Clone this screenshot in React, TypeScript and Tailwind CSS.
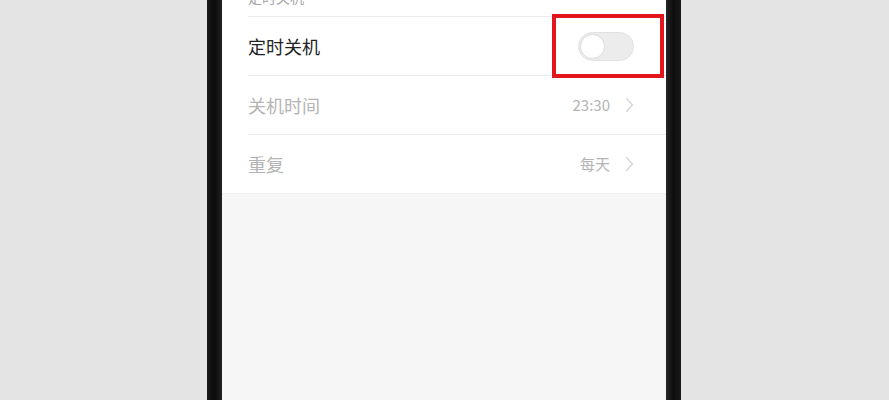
import React, { useState } from "react";

type Row = {
  label: string;
  value?: string;
  toggle?: boolean;
};

const rows: Row[] = [
  { label: "定时关机", toggle: true },
  { label: "关机时间", value: "23:30" },
  { label: "重复", value: "每天" },
];

const Chevron = () => (
  <svg width="9" height="16" viewBox="0 0 9 16" fill="none" className="ml-[15px]">
    <path d="M1.5 1.5 L7.5 8 L1.5 14.5" stroke="#d6d6d6" strokeWidth="1.4" strokeLinecap="round" strokeLinejoin="round" />
  </svg>
);

const Switch = ({ on, onChange }: { on: boolean; onChange: () => void }) => (
  <button
    onClick={onChange}
    className={`relative w-[56px] h-[29px] rounded-full border border-[#e2e2e2] ${on ? "bg-[#4cd964]" : "bg-[#ececec]"}`}
  >
    <span
      className={`absolute top-[1px] w-[25px] h-[25px] rounded-full bg-white border border-[#dcdcdc] ${on ? "left-[28px]" : "left-[1px]"}`}
    />
  </button>
);

export default function App() {
  const [enabled, setEnabled] = useState(false);

  return (
    <div
      className="flex w-[889px] h-[400px] overflow-hidden bg-[#e4e4e4]"
      style={{ fontFamily: '"Noto Sans CJK SC", "Noto Sans", sans-serif' }}
    >
      <div className="w-[207px] shrink-0" />

      {/* phone bezel, left */}
      <div className="w-[15px] shrink-0 bg-gradient-to-r from-[#1a1a1a] via-[#0b0b0b] to-[#222]" />

      {/* screen */}
      <div className="relative w-[444px] shrink-0 flex flex-col bg-[#f6f6f6]">
        <div className="bg-white">
          <div className="h-[16px] flex items-end pl-[26px] pb-[12px] overflow-hidden">
            <span className="text-[14px] leading-[14px] text-[#a8a8a8]">定时关机</span>
          </div>
          {rows.map((row, i) => (
            <div key={row.label} className="pl-[26px]">
              <div className="h-[59px] flex items-center pr-[32px] border-t border-[#ececec]">
                <span
                  className={`flex-1 text-[18px] ${i === 0 ? "text-[#222]" : "text-[#b4b4b4]"}`}
                >
                  {row.label}
                </span>
                {row.toggle ? (
                  <Switch on={enabled} onChange={() => setEnabled(!enabled)} />
                ) : (
                  <div className="flex items-center">
                    <span className="text-[15px] text-[#b4b4b4]">{row.value}</span>
                    <Chevron />
                  </div>
                )}
              </div>
            </div>
          ))}
        </div>
        <div className="flex-1 border-t border-[#efefef]" />

        {/* highlight box around the switch */}
        <div className="absolute left-[330px] top-[14px] w-[112px] h-[64px] border-[4px] border-[#e3161b]" />
      </div>

      {/* phone bezel, right */}
      <div className="w-[15px] shrink-0 bg-gradient-to-r from-[#262626] via-[#0d0d0d] to-[#1a1a1a]" />
      <div className="flex-1" />
    </div>
  );
}
